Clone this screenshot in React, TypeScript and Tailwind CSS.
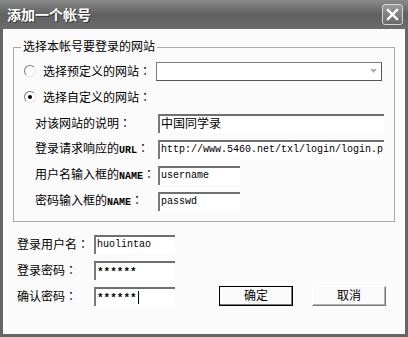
import React from 'react';

const ui = { fontFamily: '"Liberation Sans", "Noto Sans CJK SC", sans-serif' };
const mono = { fontFamily: '"Liberation Mono", "Noto Sans CJK SC", monospace' };
const jp = { fontFamily: '"Noto Sans CJK JP", sans-serif' };

// full width colon, centred in its cell like the old bitmap font
const Colon = () => <span style={jp}>：</span>;

function Radio({ checked }: { checked?: boolean }) {
  return (
    <span className="flex h-[12px] w-[12px] items-center justify-center rounded-full border border-t-[#7a7a7a] border-l-[#7a7a7a] border-r-[#e6e6e6] border-b-[#e6e6e6] bg-white">
      {checked && <span className="h-[4px] w-[4px] rounded-full bg-black" />}
    </span>
  );
}

function Field({ value, width, isMono, stars, caret }: { value: string; width: string; isMono?: boolean; stars?: boolean; caret?: boolean }) {
  return (
    <div
      className={`flex h-[19px] items-center overflow-hidden whitespace-nowrap border-t-2 border-l-2 border-t-[#6f6f6f] border-l-[#7a7a7a] bg-white pl-[1px] text-[12px] leading-none text-black ${width}`}
      style={isMono ? mono : ui}
    >
      <span className={stars ? 'pt-[3px] text-[11px] font-bold' : isMono ? 'text-[10px]' : ''}>{value}</span>
      {caret && <span className="ml-[1px] h-[13px] w-[1px] bg-black" />}
    </div>
  );
}

// latin letters in the labels are drawn in a narrow bold face
function Latin({ children }: { children: string }) {
  return (
    <span className="text-[10px] font-bold" style={mono}>
      {children}
    </span>
  );
}

function Row({ label, children }: { label: React.ReactNode; children: React.ReactNode }) {
  return (
    <div className="flex h-[26px] items-center pl-[21px]">
      <span className="w-[123px] whitespace-nowrap text-[12px] leading-none">{label}</span>
      {children}
    </div>
  );
}

export default function App() {
  return (
    <div className="flex h-[337px] w-[408px] flex-col bg-[#666666]" style={ui}>
      {/* title bar */}
      <div className="flex h-[29px] items-center justify-between bg-linear-to-b from-[#8a8a8a] via-[#616161] to-[#6c6c6c] pl-[7px] pr-[5px]">
        <span className="text-[14px] font-bold leading-none text-white [text-shadow:1px_1px_0_#333]">添加一个帐号</span>
        <div className="flex h-[21px] w-[21px] items-center justify-center rounded-[3px] border border-[#d4d4d4] bg-linear-to-b from-[#9a9a9a] to-[#6a6a6a]">
          <svg width="13" height="13" viewBox="0 0 13 13">
            <path d="M2 2 L11 11 M11 2 L2 11" stroke="#ffffff" strokeWidth="2.4" strokeLinecap="square" />
          </svg>
        </div>
      </div>

      {/* client area */}
      <div className="mx-[3px] mb-[3px] flex flex-1 flex-col bg-[#fbfbfb] pt-[11px] text-black">
        <fieldset className="mx-[10px] border border-[#a9a9a9] px-0 pb-[7px] pt-[4px]">
          <legend className="ml-[7px] px-[2px] text-[12px] leading-[14px]">选择本帐号要登录的网站</legend>

          <div className="flex h-[26px] items-center pl-[10px]">
            <Radio />
            <span className="ml-[7px] w-[113px] whitespace-nowrap text-[12px] leading-none">选择预定义的网站<Colon /></span>
            <div className="flex h-[19px] w-[226px] items-center justify-end border border-t-[#7a7a7a] border-l-[#7a7a7a] border-r-[#555555] border-b-[#555555] bg-white pr-[4px]">
              <svg width="7" height="4" viewBox="0 0 7 4">
                <path d="M0 0 L7 0 L3.5 4 Z" fill="#b0b0b0" />
              </svg>
            </div>
          </div>

          <div className="flex h-[26px] items-center pl-[10px]">
            <Radio checked />
            <span className="ml-[7px] whitespace-nowrap text-[12px] leading-none">选择自定义的网站<Colon /></span>
          </div>

          <Row label={<>对该网站的说明<Colon /></>}>
            <Field value="中国同学录" width="w-[226px]" />
          </Row>
          <Row label={<>登录请求响应的<Latin>URL</Latin><Colon /></>}>
            <Field value="http://www.5460.net/txl/login/login.p" width="w-[226px]" isMono />
          </Row>
          <Row label={<>用户名输入框的<Latin>NAME</Latin><Colon /></>}>
            <Field value="username" width="w-[82px]" isMono />
          </Row>
          <Row label={<>密码输入框的<Latin>NAME</Latin><Colon /></>}>
            <Field value="passwd" width="w-[82px]" isMono />
          </Row>
        </fieldset>

        <div className="mt-[9px] flex flex-col pl-[14px]">
          <div className="flex h-[26px] items-center">
            <span className="w-[77px] text-[12px] leading-none">登录用户名<Colon /></span>
            <Field value="huolintao" width="w-[81px]" isMono />
          </div>
          <div className="flex h-[26px] items-center">
            <span className="w-[77px] text-[12px] leading-none">登录密码<Colon /></span>
            <Field value="******" width="w-[81px]" isMono stars />
          </div>
          <div className="flex h-[26px] items-center">
            <span className="w-[77px] text-[12px] leading-none">确认密码<Colon /></span>
            <Field value="******" width="w-[81px]" isMono stars caret />
            <button className="ml-[44px] h-[20px] w-[74px] border border-black bg-[#fbfbfb] text-[12px] leading-none shadow-[inset_-1px_-1px_0_#7a7a7a]">
              确定
            </button>
            <button className="ml-[19px] h-[20px] w-[74px] border border-t-white border-l-white border-r-[#7a7a7a] border-b-[#7a7a7a] bg-[#fbfbfb] text-[12px] leading-none shadow-[inset_-1px_-1px_0_#b0b0b0]">
              取消
            </button>
          </div>
        </div>
      </div>
    </div>
  );
}
